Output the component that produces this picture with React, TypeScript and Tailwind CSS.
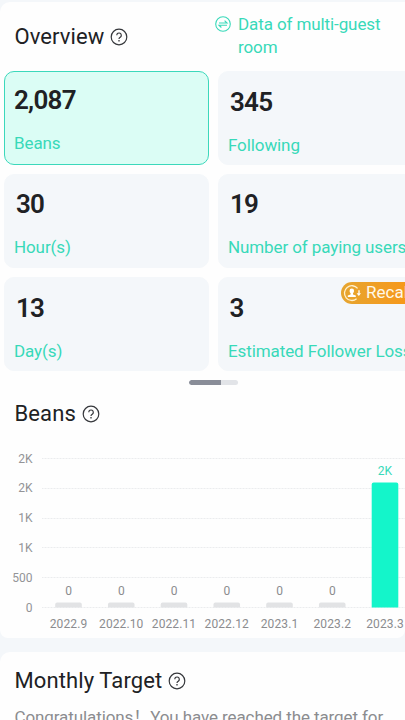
import type { ReactNode } from "react";

function HelpIcon() {
  return (
    <svg className="size-[18px] shrink-0" viewBox="0 0 18 18" fill="none" stroke="#35373b">
      <circle cx="9" cy="9" r="7.8" strokeWidth="1.2" />
      <path d="M6.8 7.3a2.25 2.25 0 1 1 3.5 1.85C9.5 9.7 9 10 9 10.9" strokeWidth="1.2" />
      <path d="M9 12.1v1.4" strokeWidth="1.3" />
    </svg>
  );
}

function SwapIcon() {
  return (
    <svg className="mt-[1px] size-4 shrink-0" viewBox="0 0 16 16" fill="none" stroke="#38d9b9" strokeWidth="1.1">
      <circle cx="8" cy="8" r="7.3" />
      <path d="M4 7h8L9.6 4.7M12 9.2H4l2.4 2.3" />
    </svg>
  );
}

function RecallIcon() {
  return (
    <svg className="size-[18px] shrink-0" viewBox="0 0 18 18" fill="none">
      <path d="M14.6 4.4A7.4 7.4 0 1 0 13.6 14.8" stroke="#fff1cf" strokeWidth="1.3" />
      <path d="M16 6.2v3.6" stroke="#fff" strokeWidth="1.3" />
      <path d="M13.6 9.2h4.4l-2.2 2.8z" fill="#fff" />
      <circle cx="8.8" cy="6.9" r="2.3" fill="#fff" />
      <path d="M7.6 8h2.4v2.6l2.8 1v1.5h-8v-1.5l2.8-1z" fill="#fff" />
    </svg>
  );
}

function Title({ children }: { children: ReactNode }) {
  return (
    <h2 className="flex items-center gap-[6px] text-[22px] leading-7 tracking-[0.1px] whitespace-nowrap text-[#202124]">
      {children}
      <HelpIcon />
    </h2>
  );
}

type CardProps = {
  value: string;
  label: string;
  active?: boolean;
  inset?: string;
  top?: string;
  badge?: ReactNode;
};

function Card({ value, label, active, inset = "pl-[2px]", top = "pt-[15px]", badge }: CardProps) {
  return (
    <div
      className={`relative h-[93.5px] w-[205px] shrink-0 rounded-[10px] border px-[9px] whitespace-nowrap ${top} ${
        active ? "border-[#3bd8bb] bg-[#dbfdf5]" : "border-[#f4f7fa] bg-[#f4f7fa]"
      }`}
    >
      <div className={`text-[26px] leading-[30px] font-semibold tracking-[-0.75px] text-[#202124] ${inset}`}>
        {value}
      </div>
      <div className="mt-[18px] text-[17px] leading-5 tracking-[-0.1px] text-[#38d9b9]">{label}</div>
      {badge}
    </div>
  );
}

const months = [
  { name: "2022.9", label: "0" },
  { name: "2022.10", label: "0" },
  { name: "2022.11", label: "0" },
  { name: "2022.12", label: "0" },
  { name: "2023.1", label: "0" },
  { name: "2023.2", label: "0" },
  { name: "2023.3", label: "2K" },
];
const ticks = ["2K", "2K", "1K", "1K", "500", "0"];

function Chart() {
  return (
    <svg className="block h-[194px] w-[405px]" viewBox="0 445 405 194" fontFamily="Roboto, sans-serif" fontSize="12">
      {ticks.map((tick, i) => {
        const y = 458.5 + i * 29.8;
        return (
          <g key={i}>
            <path d={`M42 ${Math.floor(y) + 0.5}H405`} stroke="#ebecee" strokeWidth="1" strokeDasharray="1 0.5" />
            <text x="32.5" y={y + 4} textAnchor="end" fill="#939497">
              {tick}
            </text>
          </g>
        );
      })}
      {months.map((month, i) => {
        const x = 68.5 + i * 52.75;
        const current = month.label !== "0";
        const top = current ? 482.5 : 602.5;
        return (
          <g key={month.name} textAnchor="middle">
            <path
              d={`M${x - 13.3} 607.5V${top + 2}q0-2 2-2h22.6q2 0 2 2V607.5z`}
              fill={current ? "#14f5ca" : "#e2e3e5"}
            />
            <text x={x} y={current ? 475 : 595} fill={current ? "#38d9b9" : "#8b8c8f"}>
              {month.label}
            </text>
            <text x={x} y="627.5" fill="#8b8c8f" letterSpacing="0.1">
              {month.name}
            </text>
          </g>
        );
      })}
    </svg>
  );
}

export default function App() {
  return (
    <main className="flex h-[720px] w-[405px] flex-col overflow-hidden bg-[#f4f7fa] pt-[2px] font-[Roboto,sans-serif]">
      <section className="h-[636px] shrink-0 overflow-hidden rounded-tl-[10px] rounded-b-[8px] bg-[#fefefe]">
        <header className="flex h-[69px] pl-[14.5px]">
          <div className="w-[200.5px] pt-[21px]">
            <Title>Overview</Title>
          </div>
          <div className="flex gap-[7px] pt-[13px] text-[17px] leading-[22.5px] tracking-[-0.1px] text-[#38d9b9]">
            <SwapIcon />
            <p className="-mt-[2px] w-[152px]">Data of multi-guest room</p>
          </div>
        </header>
        <div className="grid grid-cols-[205px_205px] gap-x-[9px] gap-y-[9.5px] pl-1">
          <Card value="2,087" label="Beans" active inset="pl-0" top="pt-[13px]" />
          <Card value="345" label="Following" inset="pl-[2px]" />
          <Card value="30" label="Hour(s)" top="pt-[14px]" />
          <Card value="19" label="Number of paying users" top="pt-[14px]" />
          <Card value="13" label="Day(s)" />
          <Card
            value="3"
            label="Estimated Follower Loss"
            inset="pl-[1.5px]"
            badge={
              <div className="absolute top-[4px] right-0 flex h-[22px] w-[81px] items-center gap-[5px] rounded-l-full bg-linear-to-r from-[#e6a52f] to-[#fa9512] pl-[2px] text-[17px] text-[#fff8e8]">
                <RecallIcon />
                Recall
              </div>
            }
          />
        </div>
        <div className="mt-[9px] ml-[189px] h-[5px] w-[49px] overflow-hidden rounded-full bg-[#e2e4e8]">
          <div className="h-full w-[32px] rounded-l-full bg-[#898d98]" />
        </div>
        <div className="mt-[15.5px] mb-[17px] pl-[14.5px]">
          <Title>Beans</Title>
        </div>
        <Chart />
      </section>
      <section className="mt-[14px] h-[68px] shrink-0 overflow-hidden rounded-tl-[10px] bg-[#fefefe] pt-[14.5px] pl-[14.5px]">
        <Title>Monthly Target</Title>
        <p className="mt-[11.5px] text-[17px] leading-5 tracking-[-0.1px] whitespace-nowrap text-[#8b8c8f]">
          Congratulations<span lang="zh-CN" className="font-['Noto_Sans_CJK_SC',sans-serif]">！</span>You have reached the target for
        </p>
      </section>
    </main>
  );
}
